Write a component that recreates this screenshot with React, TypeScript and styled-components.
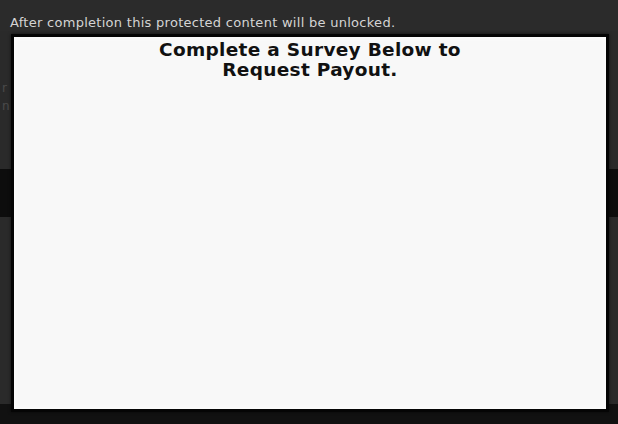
import React from 'react';
import styled, { createGlobalStyle } from 'styled-components';

const GlobalStyle = createGlobalStyle`
  html, body {
    margin: 0;
    padding: 0;
    background-color: #2a2a2a;
  }
  #root {
    width: 618px;
    height: 424px;
    overflow: hidden;
  }
`;

const Page = styled.div`
  position: relative;
  width: 618px;
  height: 424px;
  display: flex;
  flex-direction: column;
  background-color: #2a2a2a;
  font-family: "DejaVu Sans", Verdana, sans-serif;
  overflow: hidden;
`;

const Notice = styled.div`
  height: 35px;
  padding: 15px 0 0 10px;
  box-sizing: border-box;
  font-size: 13px;
  line-height: 16px;
  color: #d4d4d4;
  letter-spacing: 0.28px;
  background-color: #2b2b2b;
`;

const Section = styled.div<{ $height: number; $bg: string }>`
  height: ${p => p.$height}px;
  flex-shrink: 0;
  background-color: ${p => p.$bg};
  color: #4a4a4a;
  font-size: 12px;
  line-height: 18px;
  padding: 48px 0 0 2px;
  box-sizing: border-box;
`;

const Overlay = styled.div`
  position: absolute;
  left: 11px;
  top: 34px;
  width: 592px;
  height: 372px;
  border: 3px solid #050505;
  background-color: #f8f8f8;
  box-shadow: inset 0 0 6px #ffffff, 0 0 3px rgba(0, 0, 0, 0.6);
  display: flex;
  flex-direction: column;
  align-items: center;
`;

const Title = styled.h1`
  margin: 3px 0 0 0;
  font-family: "DejaVu Sans", Verdana, sans-serif;
  font-size: 18.5px;
  font-weight: bold;
  line-height: 20px;
  text-align: center;
  color: #111;
  width: 340px;
  letter-spacing: 0.3px;
`;

export default function App() {
  return (
    <>
      <GlobalStyle />
      <Page>
        <Notice>After completion this protected content will be unlocked.</Notice>
        <Section $height={138} $bg="#2a2a2a">
          r content<br />n more
        </Section>
        <Section $height={37} $bg="#0d0d0d" />
        <Section $height={187} $bg="#2a2a2a" />
        <Section $height={40} $bg="#111111" />
        <Overlay>
          <Title>Complete a Survey Below to Request Payout.</Title>
        </Overlay>
      </Page>
    </>
  );
}
